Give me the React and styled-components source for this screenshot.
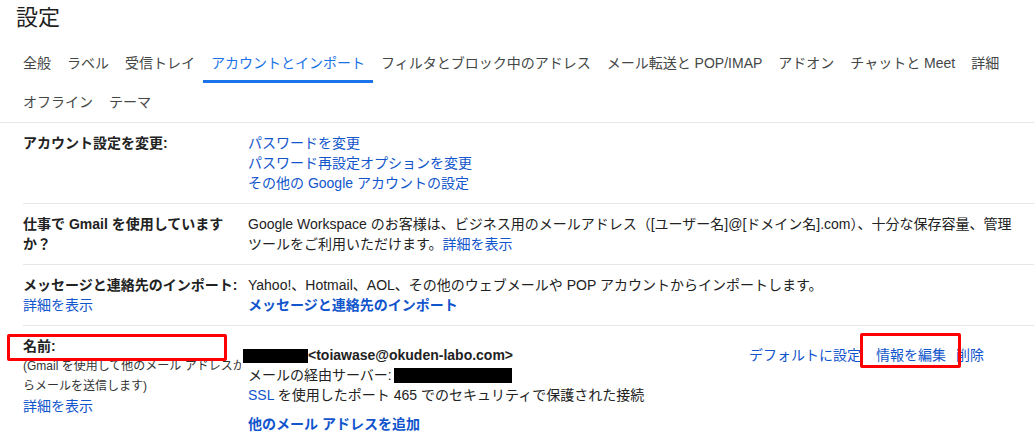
import React from 'react';
import styled, { createGlobalStyle } from 'styled-components';

const GlobalStyle = createGlobalStyle`
  body {
    margin: 0;
    background: #fff;
    color: #222;
    font-family: 'Liberation Sans', Arial, 'Noto Sans CJK JP', sans-serif;
    font-size: 14px;
  }
`;

const tabs = [
  '全般',
  'ラベル',
  '受信トレイ',
  'アカウントとインポート',
  'フィルタとブロック中のアドレス',
  'メール転送と POP/IMAP',
  'アドオン',
  'チャットと Meet',
  '詳細',
  'オフライン',
  'テーマ',
];

const App = () => {
  return (
    <Page>
      <GlobalStyle />
      <Title>設定</Title>
      <TabBar>
        {tabs.map((tab) => (
          <Tab key={tab} $active={tab === 'アカウントとインポート'}>
            {tab}
          </Tab>
        ))}
      </TabBar>

      <Settings>
        <Row>
          <Label>アカウント設定を変更:</Label>
          <Content>
            <Link>パスワードを変更</Link>
            <Link>パスワード再設定オプションを変更</Link>
            <Link>その他の Google アカウントの設定</Link>
          </Content>
        </Row>

        <Row>
          <Label>
            仕事で Gmail を使用していますか？
          </Label>
          <Content>
            <Line>
              Google Workspace のお客様は、ビジネス用のメールアドレス（[ユーザー名]@[ドメイン名].com）、十分な保存容量、管理
            </Line>
            <Line>
              ツールをご利用いただけます。<InlineLink>詳細を表示</InlineLink>
            </Line>
          </Content>
        </Row>

        <Row>
          <Label>
            メッセージと連絡先のインポート:
            <Link $normal>詳細を表示</Link>
          </Label>
          <Content>
            <Line>
              Yahoo!、Hotmail、AOL、その他のウェブメールや POP アカウントからインポートします。
            </Line>
            <Link $bold>メッセージと連絡先のインポート</Link>
          </Content>
        </Row>

        <Row $last>
          <Label>
            名前:
            <SubNote>(Gmail を使用して他のメール アドレスか</SubNote>
            <SubNote>らメールを送信します)</SubNote>
            <Link $normal>詳細を表示</Link>
          </Label>
          <Content>
            <Account>
              <AccountInfo>
                <Line $bold>
                  <Redacted $w={65} $h={14} $shift={-5} />
                  &lt;toiawase@okuden-labo.com&gt;
                </Line>
                <Line>
                  メールの経由サーバー:
                  <Redacted $w={118} $h={15} $shift={2} />
                </Line>
                <Line>
                  <InlineLink>SSL</InlineLink> を使用したポート 465 でのセキュリティで保護された接続
                </Line>
              </AccountInfo>
              <Actions>
                <ActionLink $space={15}>デフォルトに設定</ActionLink>
                <ActionLink $space={10}>情報を編集</ActionLink>
                <ActionLink>削除</ActionLink>
              </Actions>
            </Account>
            <AddLink>他のメール アドレスを追加</AddLink>
          </Content>
        </Row>
      </Settings>

      <Marker style={{ left: 7, top: 334, width: 220, height: 27 }} />
      <Marker style={{ left: 860, top: 333, width: 101, height: 35 }} />
    </Page>
  );
};

const Page = styled.div`
  position: relative;
  width: 1034px;
  height: 446px;
  overflow: hidden;
  background: #fff;
`;

const Title = styled.div`
  height: 44px;
  padding-left: 16px;
  font-size: 22px;
  line-height: 36px;
  color: #1f1f1f;
`;

const TabBar = styled.div`
  display: flex;
  flex-wrap: wrap;
  padding-left: 15px;
`;

const Tab = styled.div`
  box-sizing: border-box;
  height: 39px;
  padding: 3px 8px 0;
  line-height: 33px;
  white-space: nowrap;
  color: ${(p) => (p.$active ? '#1a73e8' : '#444746')};
  border-bottom: 3px solid ${(p) => (p.$active ? '#1a73e8' : 'transparent')};
`;

const Settings = styled.div`
  border-top: 1px solid #e6e6e6;
`;

const Row = styled.div`
  display: grid;
  grid-template-columns: 225px 1fr;
  margin-left: 23px;
  padding: 10px 0;
  line-height: 20px;
  border-bottom: ${(p) => (p.$last ? 'none' : '1px solid #e6e6e6')};
`;

const Label = styled.div`
  font-weight: bold;
  color: #222;
`;

const SubNote = styled.span`
  display: block;
  width: 218px;
  overflow: hidden;
  white-space: nowrap;
  font-size: 12px;
  font-weight: normal;
  color: #333;
`;

const Content = styled.div`
  min-width: 0;
`;

const Line = styled.div`
  white-space: nowrap;
  font-weight: ${(p) => (p.$bold ? 'bold' : 'normal')};
`;

const Link = styled.div`
  color: #15c;
  white-space: nowrap;
  font-weight: ${(p) => (p.$bold ? 'bold' : 'normal')};
  cursor: pointer;
`;

const InlineLink = styled.span`
  color: #15c;
  cursor: pointer;
`;

const Account = styled.div`
  display: flex;
  align-items: flex-start;
  padding-top: 9px;
`;

const AccountInfo = styled.div`
  flex: 1;
`;

const Redacted = styled.span`
  display: inline-block;
  width: ${(p) => p.$w}px;
  height: ${(p) => p.$h}px;
  margin-left: ${(p) => p.$shift}px;
  background: #000;
  vertical-align: -3px;
`;

const Actions = styled.div`
  display: flex;
  margin-right: 50px;
  white-space: nowrap;
`;

const ActionLink = styled.span`
  color: #15c;
  margin-right: ${(p) => p.$space || 0}px;
  cursor: pointer;
`;

const AddLink = styled.div`
  margin-top: 9px;
  color: #15c;
  font-weight: bold;
  cursor: pointer;
`;

const Marker = styled.div`
  position: absolute;
  box-sizing: border-box;
  border: 3px solid #f00;
  border-radius: 2px;
  pointer-events: none;
`;

export default App;
